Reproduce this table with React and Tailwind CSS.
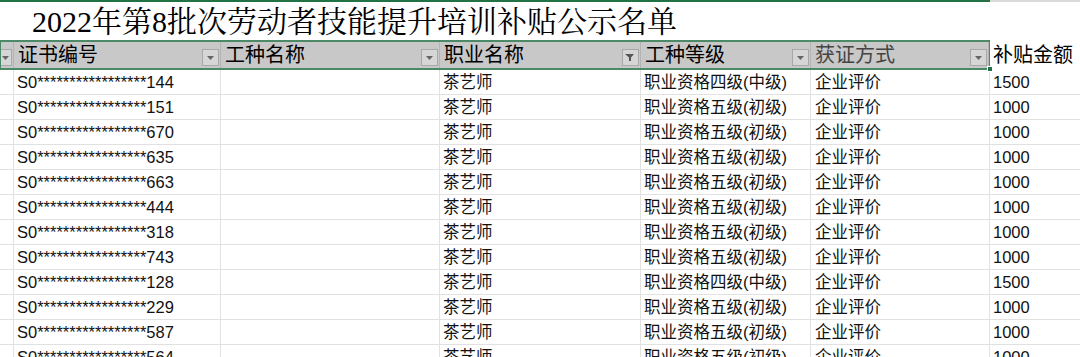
import React from 'react';

// --- DATA ---
const cols = 'grid grid-cols-[14px_207px_219px_201px_170px_179px_1fr]';

const rows = [
  ['144', '四', '中', '1500'],
  ['151', '五', '初', '1000'],
  ['670', '五', '初', '1000'],
  ['635', '五', '初', '1000'],
  ['663', '五', '初', '1000'],
  ['444', '五', '初', '1000'],
  ['318', '五', '初', '1000'],
  ['743', '五', '初', '1000'],
  ['128', '四', '中', '1500'],
  ['229', '五', '初', '1000'],
  ['587', '五', '初', '1000'],
  ['564', '五', '初', '1000'],
];

const Drop = ({ filter }) => (
  <span className="absolute right-[1px] bottom-[2px] w-[17px] h-[17px] border border-[#a8a8a8] bg-[#d6d6d6] flex items-center justify-center">
    {filter ? (
      <svg width="11" height="9" viewBox="0 0 11 9">
        <path d="M0 1h9L6 4.5V8H4V4.5z" fill="#555" />
        <path d="M1 1h3L2.5 3z" fill="#555" />
      </svg>
    ) : (
      <svg width="7" height="4" viewBox="0 0 7 4">
        <path d="M0 0h7L3.5 4z" fill="#666" />
      </svg>
    )}
  </span>
);

const HeadCell = ({ children, filter, muted }) => (
  <div className={`relative h-full pl-[4px] flex items-center border-r border-[#b4b4b4] ${muted ? 'text-[#444]' : 'text-black'}`}>
    {children}
    <Drop filter={filter} />
  </div>
);

export default function App() {
  return (
    <div className="w-[1080px] h-[357px] overflow-hidden bg-white font-['Liberation_Sans','Noto_Sans_CJK_SC',sans-serif] text-[16.5px] leading-none">
      {/* title row */}
      <div className="flex h-[40px]">
        <div className="w-[990px] border-t-2 border-[#217346] flex items-center pl-[32px] font-['Liberation_Serif','Noto_Serif_CJK_SC','Noto_Sans_CJK_SC',serif] text-[30px] text-black pt-[2px]">
          2022年第8批次劳动者技能提升培训补贴公示名单
        </div>
        <div className="flex-1 border-t-2 border-[#dadada]" />
      </div>

      {/* header row */}
      <div className={`${cols} h-[30px] text-[20px]`}>
        <div className="col-span-6 relative border-y-2 border-x border-[#4c8a67] bg-[#c8c8c8] grid grid-cols-[13px_207px_219px_201px_170px_178px]">
          <div className="relative h-full border-r border-[#b4b4b4] overflow-hidden">
            <span className="absolute right-[1px] bottom-[2px] w-[12px] h-[17px] border border-l-0 border-[#a8a8a8] bg-[#d6d6d6] flex items-center justify-center">
              <svg width="7" height="4" viewBox="0 0 7 4"><path d="M0 0h7L3.5 4z" fill="#666" /></svg>
            </span>
          </div>
          <HeadCell>证书编号</HeadCell>
          <HeadCell>工种名称</HeadCell>
          <HeadCell filter>职业名称</HeadCell>
          <HeadCell>工种等级</HeadCell>
          <HeadCell muted>获证方式</HeadCell>
          <span className="absolute right-[-4px] bottom-[-4px] w-[6px] h-[6px] bg-[#217346] border border-white" />
        </div>
        <div className="pl-[3px] flex items-center text-black">补贴金额</div>
      </div>

      {/* data rows */}
      {rows.map(([tail, lv, grade, amt], i) => (
        <div key={i} className={`${cols} h-[25px] border-b border-[#e1e1e1] text-[#111]`}>
          <div className="border-r border-[#e1e1e1]" />
          <div className="pl-[3px] pt-[1px] flex items-center border-r border-[#e1e1e1] whitespace-nowrap">S0*****************{tail}</div>
          <div className="border-r border-[#e1e1e1]" />
          <div className="pl-[3px] pt-[1px] flex items-center border-r border-[#e1e1e1]">茶艺师</div>
          <div className="pl-[3px] pt-[1px] flex items-center border-r border-[#e1e1e1] whitespace-nowrap">职业资格{lv}级({grade}级)</div>
          <div className="pl-[4px] pt-[1px] flex items-center border-r border-[#e1e1e1]">企业评价</div>
          <div className="pl-[3px] pt-[1px] flex items-center">{amt}</div>
        </div>
      ))}
    </div>
  );
}
